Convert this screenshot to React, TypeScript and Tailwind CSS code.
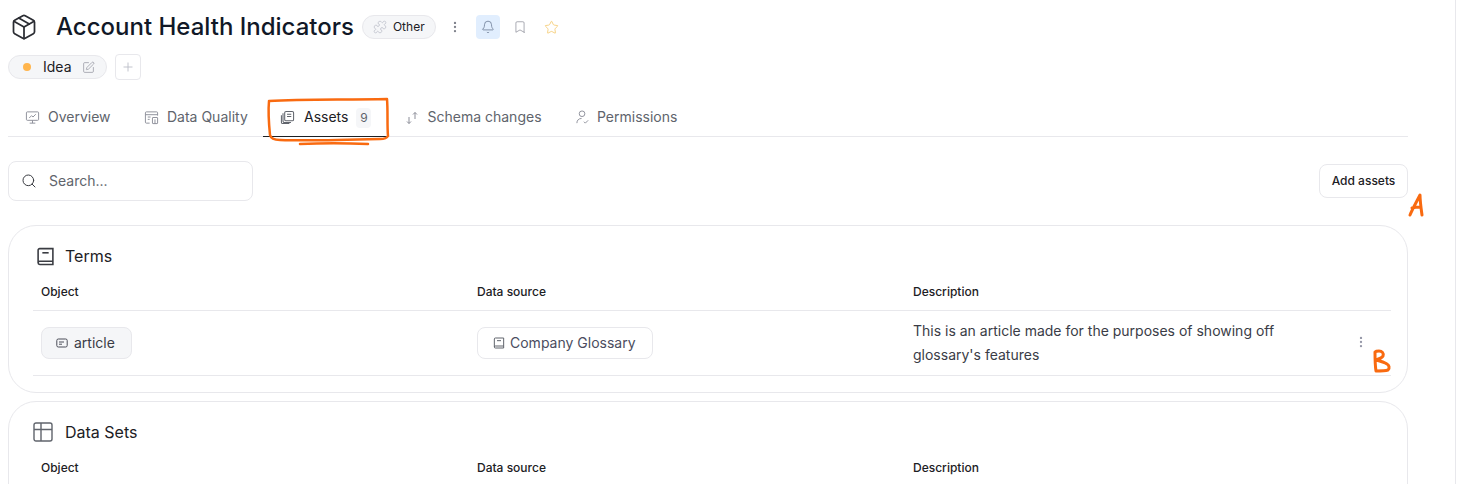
import React from "react";
import { Bell, Bookmark, EllipsisVertical, Package, Plus, Puzzle, Search, Star, SquarePen } from "lucide-react";

const OverviewIcon = () => (
    <svg className="w-[15px] h-[15px] text-[#8b8d98]" viewBox="0 0 16 16" fill="none" stroke="currentColor" strokeWidth="1">
        <rect x="1.5" y="2" width="13" height="9" rx="1" />
        <path d="M4.5 8.5 7 6l1.5 1.5L11.5 4.5M8 11v3M5 14h6" />
    </svg>
);

const QualityIcon = () => (
    <svg className="w-[15px] h-[15px] text-[#8b8d98]" viewBox="0 0 16 16" fill="none" stroke="currentColor" strokeWidth="1">
        <path d="M6 14H2.5a1 1 0 0 1-1-1V3a1 1 0 0 1 1-1h11a1 1 0 0 1 1 1v3" />
        <path d="M1.5 5h13M4 7.5h3M4 10h2" />
        <rect x="9" y="8" width="5.5" height="6.5" rx="0.5" />
        <path d="M11.7 10v4.5" />
    </svg>
);

const AssetsIcon = () => (
    <svg className="w-[15px] h-[15px] text-[#60646c]" viewBox="0 0 16 16" fill="none" stroke="currentColor" strokeWidth="1.1">
        <rect x="5" y="1.5" width="9.5" height="10" rx="1.5" />
        <path d="M7.5 4.5h4.5M7.5 7h4.5M3.2 3.5v8.3a1.5 1.5 0 0 0 1.5 1.5h7M1.5 5.5v7.5A1.5 1.5 0 0 0 3 14.5h7" />
    </svg>
);

const SchemaIcon = () => (
    <svg className="w-[14px] h-[14px] text-[#8b8d98]" viewBox="0 0 14 14" fill="none" stroke="currentColor" strokeWidth="1">
        <path d="M4 6v6.5M2 10.5l2 2 2-2M10 8V1.5M8 3.5l2-2 2 2" />
    </svg>
);

const PermissionIcon = () => (
    <svg className="w-[15px] h-[15px] text-[#8b8d98]" viewBox="0 0 16 16" fill="none" stroke="currentColor" strokeWidth="1">
        <circle cx="7.5" cy="4" r="3" />
        <path d="M2 14c0-3 2-5 5-5M9.5 12.5l1.5 1.5 3-3" />
    </svg>
);

const BookIcon = ({ className }: { className: string }) => (
    <svg className={className} viewBox="0 0 16 18" fill="none" stroke="currentColor" strokeWidth="1.5">
        <path d="M1 15V3a1.5 1.5 0 0 1 1.5-1.5H15v15H2.5A1.5 1.5 0 0 1 1 15a1.5 1.5 0 0 1 1.5-1.5H15" />
        <path d="M5 5.5h6" />
    </svg>
);

const ArticleIcon = () => (
    <svg className="w-3 h-3 text-[#4b4d58]" viewBox="0 0 12 12" fill="none" stroke="currentColor" strokeWidth="1">
        <rect x="0.8" y="2" width="10.4" height="8" rx="1.5" />
        <path d="M3 5h5M3 7.2h3" />
    </svg>
);

const TableIcon = () => (
    <svg className="w-[20px] h-[20px] text-[#60646c]" viewBox="0 0 20 20" fill="none" stroke="currentColor" strokeWidth="1.4">
        <rect x="1" y="1" width="18" height="18" rx="2" />
        <path d="M1 7.5h18M8 7.5V19M8 1v6.5" />
    </svg>
);

const Tab = ({ icon, label, className }: { icon: React.ReactNode; label: string; className: string }) => (
    <div className={`flex items-center h-full shrink-0 text-[14px] text-[#60646c] ${className}`}>
        {icon}
        <span className="pb-0.5">{label}</span>
    </div>
);

const HeadCell = ({ children }: { children: string }) => (
    <div className="w-[436px] shrink-0 pl-2 pb-0.5 text-[12px] font-medium text-[#1c2024]">{children}</div>
);

const HeadRow = () => (
    <div className="flex items-center h-[36px] border-b border-[#e8e8ec]">
        <HeadCell>Object</HeadCell>
        <HeadCell>Data source</HeadCell>
        <HeadCell>Description</HeadCell>
    </div>
);

// hand drawn notes on top of the screenshot
const Notes = () => (
    <svg className="absolute left-0 top-0 pointer-events-none" width="1459" height="484" viewBox="0 0 1459 484" fill="none" stroke="#f96a10" strokeLinecap="round" strokeLinejoin="round">
        <path strokeWidth="2.5" d="M269 101c35-2 75-1 118-2 1 12 0 26 1 37-1 2-3 3-8 3-35 1-72 2-100 1-5 0-9-1-10-5-1-10-2-23-1-34" />
        <path strokeWidth="2.5" d="M300 144c22-1 45-1 68 0" />
        <path strokeWidth="3" d="M1410 215c3-7 7-14 10-20 0 6 1 13 2 20M1412 208c3-1 7-1 9-1" />
        <path strokeWidth="3" d="M1375 352c0 6 0 13 1 19 4 0 9 0 12-1 2-2 1-5-1-6-3-2-7-3-11-4 3-1 6-2 7-4 1-3-1-5-4-5-1 0-3 0-4 1" />
    </svg>
);

const App = () => {
    return (
        <div className="relative h-[484px] w-[1459px] overflow-hidden bg-white font-['Inter',sans-serif] text-[#1c2024]">
            <div className="absolute right-[3px] top-0 h-full w-px bg-[#e8e8ec]" />

            <div className="w-[1400px] ml-2">
                {/* title */}
                <div className="flex items-center h-[28px] mt-[13px]">
                    <Package className="w-[28px] h-[28px] ml-[2px] text-[#2b2d33]" strokeWidth={1.5} />
                    <h1 className="ml-[18px] text-[24px] leading-[28px] font-medium text-[#111827]">Account Health Indicators</h1>
                    <div className="ml-[8px] flex items-center h-6 w-[74px] pl-[10px] rounded-full bg-[#f5f6f8] border border-[#e8e8ec] text-[12px]">
                        <Puzzle className="w-[14px] h-[14px] text-[#b9bbc6] mr-[6px]" strokeWidth={1.25} />
                        <span>Other</span>
                    </div>
                    <EllipsisVertical className="ml-[12px] w-[14px] h-[14px] text-[#80838d]" strokeWidth={2} />
                    <div className="ml-[14px] flex items-center justify-center w-6 h-6 rounded bg-[#e1eefe]">
                        <Bell className="w-[14px] h-[14px] text-[#60708a]" strokeWidth={1.25} />
                    </div>
                    <Bookmark className="ml-[13px] w-[14px] h-[14px] text-[#8b8d98]" strokeWidth={1.25} />
                    <Star className="ml-[17px] w-[15px] h-[15px] text-[#f3c766]" strokeWidth={1.25} />
                </div>

                {/* status */}
                <div className="flex items-center mt-[13px]">
                    <div className="flex items-center w-[99px] h-6 rounded-full bg-[#f5f6f8] border border-[#e8e8ec] pl-[14px] text-[14px]">
                        <span className="w-2 h-2 rounded-full bg-[#ffb54d]" />
                        <span className="ml-[12px] pb-0.5">Idea</span>
                        <SquarePen className="ml-[10px] w-[13px] h-[13px] text-[#8b8d98]" strokeWidth={1.25} />
                    </div>
                    <div className="ml-2 flex items-center justify-center w-[26px] h-[26px] rounded border border-[#e8e8ec]">
                        <Plus className="w-[14px] h-[14px] text-[#b9bbc6]" strokeWidth={1.5} />
                    </div>
                </div>

                {/* tabs */}
                <div className="flex h-[38px] mt-[19px] border-b border-[#e8e8ec]">
                    <Tab className="pl-[17px] gap-[8px] w-[136px]" icon={<OverviewIcon />} label="Overview" />
                    <Tab className="gap-[8px] w-[119px]" icon={<QualityIcon />} label="Data Quality" />
                    <div className="flex items-center shrink-0 h-[38px] w-[125px] pl-[17px] border-b border-[#1c2024] text-[14px] text-[#1c2024]">
                        <AssetsIcon />
                        <span className="ml-[9px] pb-0.5">Assets</span>
                        <span className="ml-[8px] flex items-center justify-center w-[15px] h-5 rounded bg-[#f5f6f8] text-[12px] text-[#60646c]">9</span>
                    </div>
                    <Tab className="pl-[17px] gap-[8.5px] w-[187px]" icon={<SchemaIcon />} label="Schema changes" />
                    <Tab className="gap-[7px]" icon={<PermissionIcon />} label="Permissions" />
                </div>

                {/* toolbar */}
                <div className="flex items-center justify-between mt-[24px]">
                    <div className="flex items-center w-[245px] h-10 pl-3 rounded-lg border border-[#e8e8ec] text-[14px] text-[#60646c]">
                        <Search className="w-4 h-4 text-[#3a3c42]" strokeWidth={1.5} />
                        <span className="ml-[12px] pb-0.5">Search...</span>
                    </div>
                    <button type="button" className="w-[89px] h-[34px] rounded-lg border border-[#e8e8ec] text-[12px] font-medium text-[#1c2024]">Add assets</button>
                </div>

                {/* terms */}
                <section className="mt-6 h-[168px] rounded-[28px] border border-[#e8e8ec] pl-6 pr-4 pt-[20px]">
                    <div className="flex items-center h-[20px] text-[16px]">
                        <BookIcon className="w-[17px] h-[19px] ml-[4px] text-[#3a3c42]" />
                        <span className="ml-[11px]">Terms</span>
                    </div>
                    <div className="mt-[9px]">
                        <HeadRow />
                    </div>
                    <div className="flex items-center h-[65px] border-b border-[#e8e8ec]">
                        <div className="w-[436px] shrink-0 pl-2">
                            <div className="flex items-center w-[91px] h-8 pl-[14px] gap-[6px] rounded-lg bg-[#f5f6f8] border border-[#e8e8ec] text-[14px] text-[#3a3c46]">
                                <ArticleIcon />
                                <span className="pb-0.5">article</span>
                            </div>
                        </div>
                        <div className="w-[436px] shrink-0 pl-2">
                            <div className="flex items-center w-[176px] h-8 pl-[15px] gap-[5px] rounded-lg border border-[#e8e8ec] text-[14px] text-[#4b4d60]">
                                <BookIcon className="w-3 h-3 text-[#60646c]" />
                                <span className="pb-0.5">Company Glossary</span>
                            </div>
                        </div>
                        <div className="flex items-center shrink-0 w-[486px] pl-2">
                            <p className="w-[400px] text-[14px] leading-6 text-[#3a3c46]">This is an article made for the purposes of showing off glossary's features</p>
                            <EllipsisVertical className="ml-[41px] mb-0.5 w-[14px] h-[14px] text-[#9698a8]" strokeWidth={2} />
                        </div>
                    </div>
                </section>

                {/* data sets */}
                <section className="mt-2 h-[160px] rounded-[28px] border border-[#e8e8ec] pl-6 pr-4 pt-[20px]">
                    <div className="flex items-center h-[20px] text-[16px]">
                        <TableIcon />
                        <span className="ml-[12px]">Data Sets</span>
                    </div>
                    <div className="mt-[9px]">
                        <HeadRow />
                    </div>
                </section>
            </div>

            <Notes />
        </div>
    );
};

export default App;
